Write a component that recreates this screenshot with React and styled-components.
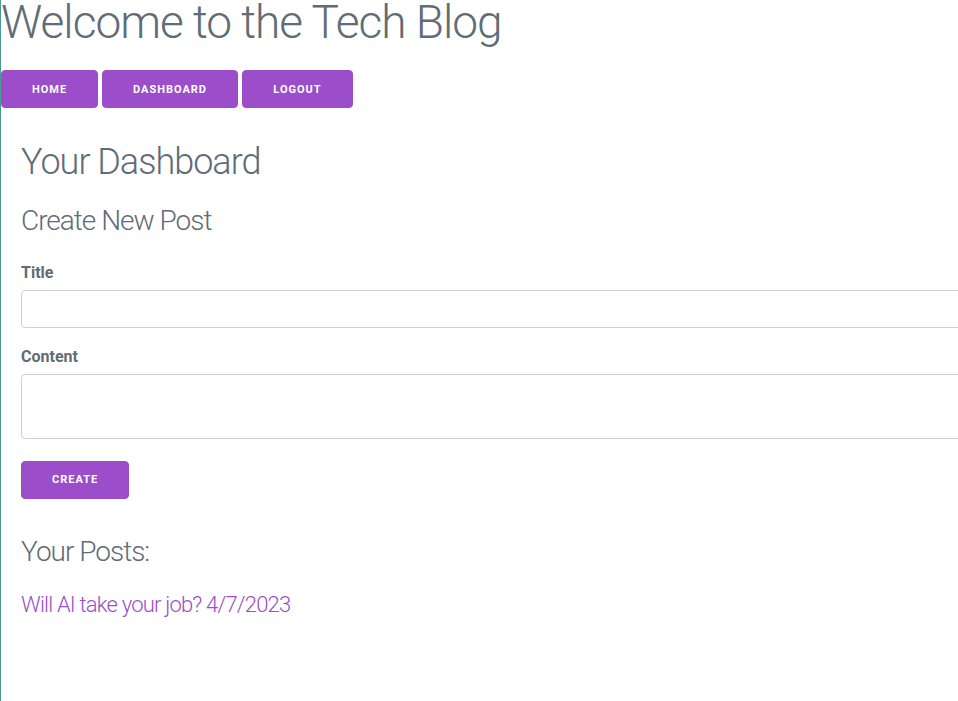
import styled, { createGlobalStyle } from 'styled-components';

const GlobalStyle = createGlobalStyle`
  html, body {
    margin: 0;
    padding: 0;
    overflow: hidden;
    background: #fff;
  }
  body {
    font-family: Roboto, 'Helvetica Neue', Arial, sans-serif;
    font-weight: 300;
    color: #606c76;
    font-size: 16px;
  }
`;

const Page = styled.div`
  border-left: 1px solid #4a9b92;
  height: 100vh;
  box-sizing: border-box;
  overflow: hidden;
`;

const SiteTitle = styled.h1`
  font-size: 46px;
  font-weight: 300;
  line-height: 44px;
  letter-spacing: -1px;
  margin: 0 0 26px;
  white-space: nowrap;
`;

const Nav = styled.nav`
  display: flex;
  gap: 4px;
`;

const Button = styled.button`
  height: 38px;
  padding: 0 30px;
  background: #9b4dca;
  border: 1px solid #9b4dca;
  border-radius: 4px;
  color: #fff;
  font-family: Roboto, Arial, sans-serif;
  font-size: 11px;
  font-weight: 700;
  letter-spacing: 1px;
  text-transform: uppercase;
  cursor: pointer;
  box-sizing: border-box;
`;

const NavButton = styled(Button)`
  width: ${(p) => p.$w}px;
  padding: 0;
`;

const Main = styled.main`
  padding: 0 0 0 20px;
  width: 1000px;
`;

const Heading = styled.h2`
  font-weight: 300;
  margin: 0;
  font-size: ${(p) => p.$size}px;
  letter-spacing: -1px;
  line-height: 1.2;
  margin-top: ${(p) => p.$top}px;
`;

const Form = styled.form`
  display: flex;
  flex-direction: column;
  align-items: flex-start;
`;

const Label = styled.label`
  font-weight: 700;
  font-size: 16px;
  display: block;
  margin-top: ${(p) => p.$top}px;
  margin-bottom: 8px;
`;

const Input = styled.input`
  width: 100%;
  height: 38px;
  border: 1px solid #d1d1d1;
  border-radius: 4px;
  box-sizing: border-box;
  padding: 6px 10px 7px;
  font-family: inherit;
  font-size: 16px;
  background: transparent;
`;

const TextArea = styled.textarea`
  width: 100%;
  height: 65px;
  border: 1px solid #d1d1d1;
  border-radius: 4px;
  box-sizing: border-box;
  padding: 6px 10px 7px;
  font-family: inherit;
  font-size: 16px;
  resize: none;
  display: block;
`;

const SubmitButton = styled(Button)`
  margin-top: 22px;
`;

const PostLink = styled.a`
  display: block;
  margin-top: 24px;
  color: #9b4dca;
  font-size: 22px;
  font-weight: 300;
  text-decoration: none;
  letter-spacing: -0.8px;
`;

function App() {
  return (
    <Page>
      <GlobalStyle />
      <SiteTitle>Welcome to the Tech Blog</SiteTitle>
      <Nav>
        <NavButton $w={97}>Home</NavButton>
        <NavButton $w={136}>Dashboard</NavButton>
        <NavButton $w={111}>Logout</NavButton>
      </Nav>
      <Main>
        <Heading $size={36} $top={33}>Your Dashboard</Heading>
        <Heading $size={28} $top={20}>Create New Post</Heading>
        <Form onSubmit={(e) => e.preventDefault()}>
          <Label $top={25} htmlFor="title">Title</Label>
          <Input id="title" type="text" />
          <Label $top={19} htmlFor="content">Content</Label>
          <TextArea id="content" />
          <SubmitButton type="submit">Create</SubmitButton>
        </Form>
        <Heading $size={28} $top={36}>Your Posts:</Heading>
        <PostLink href="#">Will AI take your job? 4/7/2023</PostLink>
      </Main>
    </Page>
  );
}

export default App;
